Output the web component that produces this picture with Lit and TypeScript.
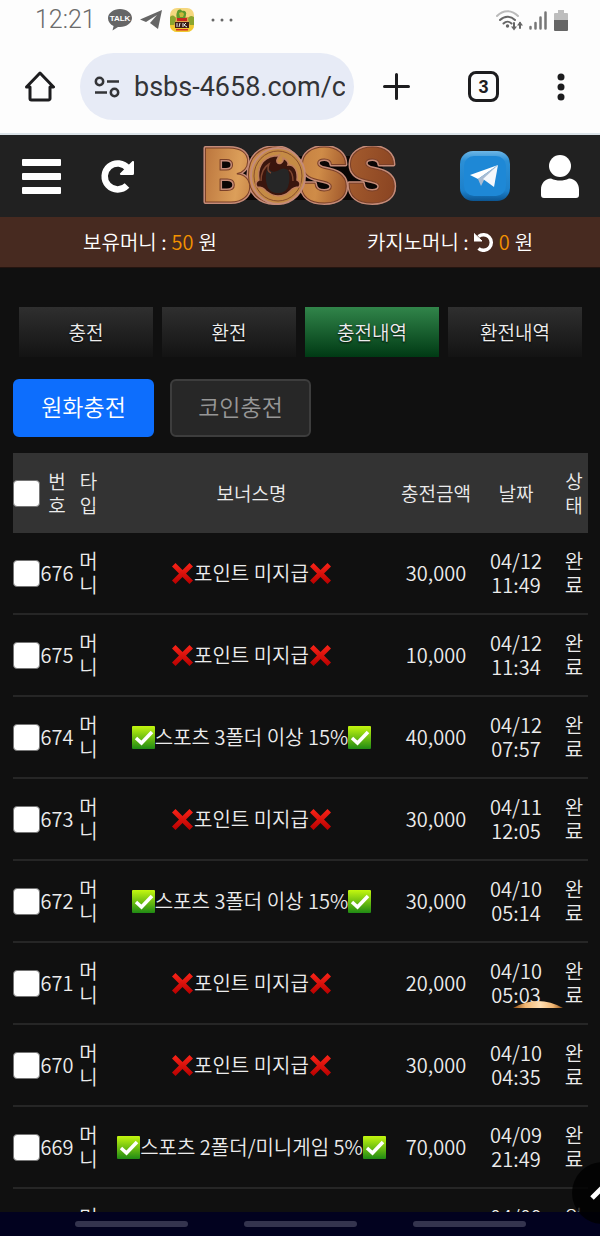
import { LitElement, html, css, svg, nothing } from 'lit';
import { customElement, property } from 'lit/decorators.js';
import { classMap } from 'lit/directives/class-map.js';

type Mark = 'cross' | 'check';

interface Charge {
  no?: string;
  mark?: Mark;
  bonus?: string;
  amount?: string;
  date: string;
}

const NO_POINT = '포인트 미지급';
const SPORTS_15 = '스포츠 3폴더 이상 15%';

const charges: Charge[] = [
  { no: '676', mark: 'cross', bonus: NO_POINT, amount: '30,000', date: '04/12 11:49' },
  { no: '675', mark: 'cross', bonus: NO_POINT, amount: '10,000', date: '04/12 11:34' },
  { no: '674', mark: 'check', bonus: SPORTS_15, amount: '40,000', date: '04/12 07:57' },
  { no: '673', mark: 'cross', bonus: NO_POINT, amount: '30,000', date: '04/11 12:05' },
  { no: '672', mark: 'check', bonus: SPORTS_15, amount: '30,000', date: '04/10 05:14' },
  { no: '671', mark: 'cross', bonus: NO_POINT, amount: '20,000', date: '04/10 05:03' },
  { no: '670', mark: 'cross', bonus: NO_POINT, amount: '30,000', date: '04/10 04:35' },
  { no: '669', mark: 'check', bonus: '스포츠 2폴더/미니게임 5%', amount: '70,000', date: '04/09 21:49' },
  { date: '04/09' },
];

const reset = css`
  * {
    box-sizing: border-box;
  }

  svg {
    display: block;
    flex: none;
  }

  button {
    margin: 0;
    padding: 0;
    border: 0;
    background: none;
    color: inherit;
    font: inherit;
    cursor: pointer;
  }
`;

@customElement('status-bar')
export class StatusBar extends LitElement {
  static styles = [reset, css`
    :host {
      display: flex;
      justify-content: space-between;
      align-items: center;
      height: 40px;
      padding: 0 32px 0 35px;
      background: #fdfdfd;
      color: #6b6b6b;
      font: 25px/40px Roboto, sans-serif;
    }

    .group {
      display: flex;
      align-items: center;
      gap: 8px;
    }

    .group.end {
      gap: 6px;
    }

    .time {
      margin-right: 4px;
      font-weight: 300;
    }

    .more {
      margin-left: 9px;
    }

    .talk {
      font: 700 8px "Liberation Sans", sans-serif;
    }
  `];

  render() {
    return html`
      <div class="group">
        <span class="time">12:21</span>
        <svg width="24" height="22" viewBox="0 0 24 22">
          <path d="M12 0C5.400 0 0 4 0 9.200c0 3.400 2.300 6.200 5.600 7.900L4.500 21.500l5.500-3.600c.7.100 1.300.1 2 .1 6.600 0 12-3.800 12-8.900S18.600 0 12 0z" fill="#666"/>
          <text class="talk" x="12" y="12" text-anchor="middle" fill="#fff">TALK</text>
        </svg>
        <svg width="22" height="20" viewBox="0 0 22 20">
          <path d="M22 0 0 9.500l6 2.500L17 5l-7 8 8 6z" fill="#666"/>
        </svg>
        <svg width="24" height="24" viewBox="0 0 24 24">
          <defs>
            <clipPath id="app"><rect width="24" height="24" rx="7"/></clipPath>
          </defs>
          <g clip-path="url(#app)">
            <rect width="24" height="24" fill="#f5d77e"/>
            <rect y="9" width="24" height="8" fill="#e2a04a"/>
            <rect y="17" width="24" height="7" fill="#f0c930"/>
            <path d="M0 9c3-3 5-1 6 2l-2 6H0zM24 9c-3-2-5-1-6 2l2 6h4z" fill="#8ba52e"/>
            <path d="M7 4c1-3 4-3 5-1 3-1 5 1 4 4l-1 4H8c-2-2-2-4-1-7z" fill="#5f9a2c"/>
            <path d="M9 5c2-1 4-1 5 1l-1 3h-3z" fill="#c9b83a"/>
            <path d="M7 10h10v3H7z" fill="#c6281f"/>
            <path d="M5 14h14v6H5z" fill="#3a1d14"/>
            <path d="M7 15v4m3-4-1 4m4-4v4m3-4-2 2 3 2" stroke="#eee" fill="none"/>
            <path d="M6 21h12v1.500H6z" fill="#d83020"/>
          </g>
        </svg>
        <svg class="more" width="22" height="4" viewBox="0 0 22 4" fill="#666">
          <circle cx="2" cy="2" r="1.500"/><circle cx="11" cy="2" r="1.500"/><circle cx="20" cy="2" r="1.500"/>
        </svg>
      </div>
      <div class="group end">
        <svg width="27" height="21" viewBox="0 0 27 21" fill="none" stroke-width="2" stroke-linecap="round">
          <path d="M1 6c6-6.500 15-6.500 21 0" stroke="#bbb"/>
          <path d="M4 10c4.500-4.500 10.500-4.500 15 0M7.500 13.500c2.500-2.500 5.500-2.500 8 0" stroke="#666"/>
          <circle cx="11.500" cy="16" r="1.700" fill="#666"/>
          <path d="M18 13v5M24 18v-5" stroke="#666"/>
          <path d="m15 16.500 3 4 3-4zM21 15.500l3-4 3 4z" fill="#666"/>
        </svg>
        <svg width="19" height="19" viewBox="0 0 19 19" stroke="#777" stroke-width="2.500" stroke-linecap="round">
          <path d="M1.500 16v1.500M6.500 12v5.500M11.500 6.500v11M16.500 1.500v16"/>
        </svg>
        <svg width="14" height="21" viewBox="0 0 14 21">
          <path d="M4 0h6v3h3a1 1 0 0 1 1 1v6H0V4a1 1 0 0 1 1-1h3z" fill="#bdbdbd"/>
          <path d="M0 10h14v10a1 1 0 0 1-1 1H1a1 1 0 0 1-1-1z" fill="#666"/>
        </svg>
      </div>
    `;
  }
}

@customElement('browser-bar')
export class BrowserBar extends LitElement {
  static styles = [reset, css`
    :host {
      display: flex;
      align-items: center;
      height: 95px;
      padding: 0 35px 0 25px;
      border-bottom: 2px solid #dbe3e9;
      background: #fdfdfd;
      color: #1d1d1f;
    }

    .address {
      display: flex;
      flex: 1;
      align-items: center;
      gap: 14px;
      min-width: 0;
      height: 67px;
      margin: 0 29px 0 25px;
      padding: 0 9px 0 14px;
      border-radius: 34px;
      background: #e7ebf6;
    }

    input {
      flex: 1;
      min-width: 0;
      padding: 0;
      border: 0;
      outline: 0;
      background: none;
      color: #333437;
      font: 27px/40px Roboto, sans-serif;
    }

    .actions {
      display: flex;
      align-items: center;
      gap: 58px;
    }

    .count {
      width: 31px;
      height: 31px;
      border: 3px solid #1d1d1f;
      border-radius: 8px;
      font: 700 18px/24px "Liberation Sans", sans-serif;
    }
  `];

  render() {
    return html`
      <button aria-label="Home">
        <svg width="30" height="31" viewBox="0 0 30 31" fill="none" stroke="currentColor" stroke-width="3" stroke-linejoin="round">
          <path d="M1.500 16 15 2l13.500 14H25v11.500a1.500 1.500 0 0 1-1.500 1.500h-17A1.500 1.500 0 0 1 5 27.500V16z"/>
        </svg>
      </button>
      <div class="address">
        <svg width="26" height="22" viewBox="0 0 26 22" fill="none" stroke="#333437" stroke-width="2.500">
          <circle cx="5.500" cy="5.500" r="3.700"/>
          <path d="M13 5.500h12M1 16.500h12"/>
          <circle cx="20.500" cy="16.500" r="3.700"/>
        </svg>
        <input type="text" aria-label="Address" .value=${'bsbs-4658.com/c'}>
      </div>
      <div class="actions">
        <button aria-label="New tab">
          <svg width="27" height="27" viewBox="0 0 27 27" stroke="currentColor" stroke-width="3" stroke-linecap="round">
            <path d="M13.500 1.500v24M1.500 13.500h24"/>
          </svg>
        </button>
        <button class="count">3</button>
        <button aria-label="Menu">
          <svg width="8" height="28" viewBox="0 0 8 28" fill="currentColor">
            <circle cx="4" cy="4" r="3.500"/><circle cx="4" cy="14" r="3.500"/><circle cx="4" cy="24" r="3.500"/>
          </svg>
        </button>
      </div>
    `;
  }
}

@customElement('boss-logo')
export class BossLogo extends LitElement {
  static styles = [reset, css`
    :host {
      display: block;
    }

    text {
      font: 900 74px Inter, sans-serif;
      stroke-linejoin: round;
    }
  `];

  render() {
    return html`
      <svg width="195" height="60" viewBox="0 0 195 60" role="img" aria-label="BOSS">
        <defs>
          <linearGradient id="wood" gradientUnits="userSpaceOnUse" x1="0" y1="0" x2="195" y2="30">
            <stop offset="0" stop-color="#b9733c"/>
            <stop offset=".2" stop-color="#dc9f5a"/>
            <stop offset=".35" stop-color="#b9733a"/>
            <stop offset=".6" stop-color="#cf8c48"/>
            <stop offset=".75" stop-color="#a25a2d"/>
            <stop offset="1" stop-color="#8a4422"/>
          </linearGradient>
        </defs>
        <path d="M8 54 12 10H178l6 44z" fill="#0a0605"/>
        <text fill="#3a150d" stroke="#c58b78" stroke-width="4" x="-1 43 96 144" y="56">BOSS</text>
        <text fill="url(#wood)" stroke="#7a4028" stroke-width="1" x="-1 43 96 144" y="56">BOSS</text>
        <!-- emblem set into the O -->
        <ellipse cx="75" cy="30" rx="27" ry="28" fill="#c58b45" stroke="#c58b78" stroke-width="2"/>
        <ellipse cx="75" cy="30" rx="24" ry="25" fill="none" stroke="#8a4e2c"/>
        <path d="M54 41c-2-3-1-6 2-7-2-12 3-22 15-24 3 0 5-.5 6-2-1 3-4 5-3 8 2 3 7 1 6-4 4 2 6 4 5 7 7-1 10 7 9 15 3 1 4 4 2 7-4 0-7 2-9 4-4 4-8 5-12 5s-8-2-12-5c-2-3-5-4-9-4z" fill="#3a150d" stroke="#c07f5e" stroke-width="1.500"/>
        <path d="M65 42c-3-7-3-15 0-21 2 5 6 6 11 3 3-2 6-2 9 0 2 5 2 11 0 17-2 4-5 6-10 6s-8-2-10-5z" fill="#262626"/>
        <path d="M58 35c0-8 3-14 8-17-2 5-1 8 2 9M86 24c3 2 4 6 4 11" fill="none" stroke="#7f4630" stroke-width="1.500"/>
      </svg>
    `;
  }
}

@customElement('site-header')
export class SiteHeader extends LitElement {
  static styles = [reset, css`
    :host {
      display: block;
      color: #fff;
      font: 350 20px/28px "Noto Sans CJK KR", sans-serif;
    }

    .bar {
      display: grid;
      grid-template-columns: 1fr auto 1fr;
      align-items: center;
      height: 82px;
      padding: 0 21px;
      background: #212121;
    }

    .side {
      display: flex;
      align-items: center;
      gap: 40px;
    }

    .side.end {
      justify-content: flex-end;
      gap: 31px;
    }

    .money {
      display: grid;
      grid-template-columns: 1fr 1fr;
      height: 51px;
      border-bottom: 1px solid #24140f;
      background: #472a20;
    }

    .money div {
      display: flex;
      justify-content: center;
      align-items: center;
      gap: 5px;
    }

    b {
      color: #f39200;
      font-weight: 350;
    }
  `];

  render() {
    return html`
      <header class="bar">
        <div class="side">
          <button aria-label="메뉴">
            <svg width="40" height="35" viewBox="0 0 40 35" fill="#fff">
              <rect x="1" width="39" height="7" rx="1"/><rect x="1" y="14" width="39" height="7" rx="1"/><rect x="1" y="28" width="39" height="7" rx="1"/>
            </svg>
          </button>
          <button aria-label="새로고침">
            <svg width="33" height="34" viewBox="0 0 33 34">
              <path d="M27 9.500a13 13 0 1 0-1 17" fill="none" stroke="#fff" stroke-width="6.500"/>
              <path d="M33 3v11.500a1.500 1.500 0 0 1-1.500 1.500H20c-1 0-1.500-1-.8-1.700L31.300 2.200c.7-.6 1.700-.3 1.700.8z" fill="#fff"/>
            </svg>
          </button>
        </div>
        <boss-logo></boss-logo>
        <div class="side end">
          <a href="#telegram" aria-label="Telegram">
            <svg width="50" height="50" viewBox="0 0 50 50">
              <defs>
                <linearGradient id="glass" x2="0" y2="1">
                  <stop offset="0" stop-color="#6db6e6"/>
                  <stop offset=".2" stop-color="#2b8fd6"/>
                  <stop offset=".8" stop-color="#1c80cb"/>
                  <stop offset="1" stop-color="#0c5591"/>
                </linearGradient>
              </defs>
              <rect width="50" height="50" rx="13" fill="url(#glass)"/>
              <rect x="4" y="5" width="42" height="40" rx="10" fill="#1e88d6"/>
              <path d="m38 14-28 10 8 4z" fill="#fff"/>
              <path d="M38 14 18 28l3 7 3-6z" fill="#a9bcd2"/>
              <path d="M38 14 23 28l11 8z" fill="#f4f7fb"/>
            </svg>
          </a>
          <button aria-label="내 정보">
            <svg width="38" height="43" viewBox="0 0 38 43" fill="#fff">
              <circle cx="19" cy="11" r="11"/>
              <path d="M10 23.500c3 1.500 6 2 9 2s6-.5 9-2c6 0 10 5 10 11V40a3 3 0 0 1-3 3H3a3 3 0 0 1-3-3v-5.500c0-6 4-11 10-11z"/>
            </svg>
          </button>
        </div>
      </header>
      <div class="money">
        <div>보유머니 : <b>50</b> 원</div>
        <div>
          카지노머니 :
          <button aria-label="카지노머니 갱신">
            <svg width="20" height="20" viewBox="0 0 20 20">
              <path d="M4.500 4.500a7.800 7.800 0 1 1 0 12" fill="none" stroke="#fff" stroke-width="3.500"/>
              <path d="M0 1.500V9h8z" fill="#fff" stroke="#fff" stroke-linejoin="round"/>
            </svg>
          </button>
          <b>0</b> 원
        </div>
      </div>
    `;
  }
}

@customElement('bonus-mark')
export class BonusMark extends LitElement {
  @property() type: Mark = 'cross';

  static styles = [reset, css`
    :host {
      display: block;
    }
  `];

  shape() {
    if (this.type === 'cross') {
      return svg`
        <defs>
          <linearGradient id="fill" x2="0" y2="1">
            <stop offset="0" stop-color="#fa2418"/><stop offset="1" stop-color="#b80000"/>
          </linearGradient>
        </defs>
        <path d="m4.500 1 7 7 7-7L22 4.500l-7 7 7 7-3.500 3.500-7-7-7 7L1 18.500l7-7-7-7z" fill="url(#fill)"/>
      `;
    }
    return svg`
      <defs>
        <linearGradient id="fill" x2="0" y2="1">
          <stop offset="0" stop-color="#c4f70f"/><stop offset="1" stop-color="#1f8a14"/>
        </linearGradient>
      </defs>
      <rect width="23" height="23" rx="1" fill="url(#fill)"/>
      <path d="m4 12 5.500 5L20 6" fill="none" stroke="#fff" stroke-width="3.500"/>
    `;
  }

  render() {
    return html`<svg width="23" height="23" viewBox="0 0 23 23">${this.shape()}</svg>`;
  }
}

@customElement('charge-table')
export class ChargeTable extends LitElement {
  @property({ attribute: false }) rows: Charge[] = [];

  static styles = [reset, css`
    :host {
      display: block;
    }

    table {
      width: 100%;
      border-collapse: collapse;
      table-layout: fixed;
      color: #ececec;
      font: 350 20px/24px "Noto Sans CJK KR", sans-serif;
      text-align: center;
    }

    th {
      padding: 16px 0;
      background: #333;
      font-size: 19px;
      font-weight: 350;
    }

    td {
      padding: 16px 0;
      border-bottom: 2px solid #262626;
    }

    .partial {
      vertical-align: top;
    }

    .pick { width: 27px; }
    .no { width: 34px; }
    .type { width: 29px; }
    .amount { width: 72px; }
    .date { width: 88px; }
    .state { width: 28px; }

    .narrow {
      display: block;
      width: 20px;
      margin: 0 auto;
    }

    .bonus {
      display: flex;
      justify-content: center;
      align-items: center;
      white-space: nowrap;
    }

    input {
      display: block;
      width: 27px;
      height: 27px;
      margin: 0;
      appearance: none;
      border: 1px solid #767676;
      border-radius: 4px;
      background: #fff;
    }
  `];

  row(r: Charge) {
    return html`
      <tr class=${classMap({ partial: !r.no })}>
        <td>${r.no ? html`<input type="checkbox" aria-label=${r.no}>` : nothing}</td>
        <td>${r.no}</td>
        <td><span class="narrow">머니</span></td>
        <td>
          ${r.mark ? html`
            <div class="bonus">
              <bonus-mark type=${r.mark}></bonus-mark>
              <span>${r.bonus}</span>
              <bonus-mark type=${r.mark}></bonus-mark>
            </div>
          ` : nothing}
        </td>
        <td>${r.amount}</td>
        <td>${r.date}</td>
        <td><span class="narrow">완료</span></td>
      </tr>
    `;
  }

  render() {
    return html`
      <table>
        <thead>
          <tr>
            <th class="pick"><input type="checkbox" aria-label="전체 선택"></th>
            <th class="no"><span class="narrow">번호</span></th>
            <th class="type"><span class="narrow">타입</span></th>
            <th>보너스명</th>
            <th class="amount">충전금액</th>
            <th class="date">날짜</th>
            <th class="state"><span class="narrow">상태</span></th>
          </tr>
        </thead>
        <tbody>${this.rows.map((r) => this.row(r))}</tbody>
      </table>
    `;
  }
}

@customElement('app-root')
export class AppRoot extends LitElement {
  static styles = [reset, css`
    :host {
      position: relative;
      display: flex;
      flex-direction: column;
      height: 100vh;
      overflow: hidden;
      background: #101010;
      color: #eee;
      font: 350 19px/24px "Noto Sans CJK KR", sans-serif;
    }

    main {
      flex: 1;
      min-height: 0;
      overflow: hidden;
      padding: 39px 12px 0 13px;
    }

    .tabs {
      display: grid;
      grid-template-columns: repeat(4, 1fr);
      gap: 9px;
      padding: 0 6px;
    }

    .tabs button {
      height: 50px;
      background: linear-gradient(#2f2f2f, #131313);
      text-shadow: 0 1px 2px #000;
    }

    .tabs .active {
      background: linear-gradient(#31854a, #003a14);
    }

    .kinds {
      display: flex;
      gap: 16px;
      margin: 22px 0 16px;
    }

    .kinds button {
      width: 141px;
      height: 58px;
      padding-bottom: 4px;
      border: 2px solid #3d3d3d;
      border-radius: 6px;
      background: #272727;
      color: #979797;
      font-size: 23px;
    }

    .kinds .active {
      border-color: #0d6efd;
      background: #0d6efd;
      color: #fff;
    }

    .system {
      display: flex;
      flex: none;
      justify-content: center;
      align-items: center;
      gap: 56px;
      height: 24px;
      background: #02021f;
    }

    .system button {
      width: 113px;
      height: 6px;
      border-radius: 3px;
      background: #34344e;
    }

    /* floating widgets over the list */
    .coin {
      position: absolute;
      right: 37px;
      bottom: 228px;
    }

    .top {
      position: absolute;
      right: -34px;
      bottom: 12px;
      width: 62px;
      height: 62px;
      border-radius: 50%;
      background: rgba(0, 0, 0, .8);
    }
  `];

  render() {
    return html`
      <status-bar></status-bar>
      <browser-bar></browser-bar>
      <site-header></site-header>
      <main>
        <nav class="tabs">
          <button>충전</button>
          <button>환전</button>
          <button class="active">충전내역</button>
          <button>환전내역</button>
        </nav>
        <div class="kinds">
          <button class="active">원화충전</button>
          <button>코인충전</button>
        </div>
        <charge-table .rows=${charges}></charge-table>
      </main>
      <div class="system">
        <button aria-label="Recents"></button>
        <button aria-label="Home"></button>
        <button aria-label="Back"></button>
      </div>
      <svg class="coin" width="50" height="8" viewBox="0 0 50 8">
        <defs>
          <linearGradient id="gold">
            <stop offset="0" stop-color="#8a4a10"/>
            <stop offset=".25" stop-color="#f0b673"/>
            <stop offset=".55" stop-color="#ffe0b4"/>
            <stop offset=".8" stop-color="#f0b673"/>
            <stop offset="1" stop-color="#8a4a10"/>
          </linearGradient>
        </defs>
        <path d="M0 8Q25-6 50 8z" fill="url(#gold)"/>
      </svg>
      <button class="top" aria-label="맨 위로">
        <svg width="62" height="62" viewBox="0 0 62 62" fill="none" stroke="#fff" stroke-width="5">
          <path d="m20 36 11-11 11 11"/>
        </svg>
      </button>
    `;
  }
}
